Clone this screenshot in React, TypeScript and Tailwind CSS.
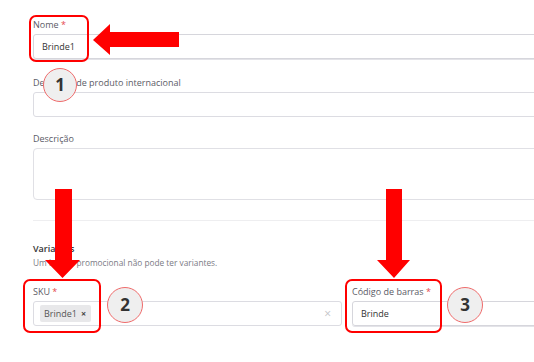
const Req = () => <span className="text-[#e5484d]"> *</span>;

const Field: React.FC<{ label: React.ReactNode; children: React.ReactNode; className?: string }> = ({
  label,
  children,
  className,
}) => (
  <div className={"flex flex-col " + (className ?? "")}>
    <label className="text-[9px] leading-[12px] text-[#5b5b66] mb-[3px]">{label}</label>
    {children}
  </div>
);

const Callout: React.FC<{ n: number; className: string }> = ({ n, className }) => (
  <div
    className={
      "absolute rounded-full bg-[#efefef] border border-[#ef6b6b] flex items-center justify-center text-[17px] font-bold text-[#333] " +
      className
    }
  >
    {n}
  </div>
);

const App: React.FC = () => {
  return (
    <div className="relative w-[534px] h-[362px] overflow-hidden bg-white font-['Open_Sans',sans-serif]">
      <form className="w-[661px] pl-[33px] pt-[19px] flex flex-col">
        <Field label={<>Nome<Req /></>}>
          <div className="h-[25px] rounded-[3px] border border-[#d6d6dc] shadow-[0_1px_0_#e3e3e8] flex items-center px-[8px] text-[9px] text-[#333]">
            Brinde1
          </div>
        </Field>

        <Field label="Descrição de produto internacional" className="mt-[18px]">
          <div className="h-[25px] rounded-[3px] border border-[#dcdce2]" />
        </Field>

        <Field label="Descrição" className="mt-[16px]">
          <div className="h-[52px] rounded-[4px] border border-[#e0e0e5]" />
        </Field>

        <div className="mt-[20px] h-px bg-[#eeeef0]" />

        <div className="mt-[22px] text-[9px] leading-[12px] font-semibold text-[#333]">Variantes</div>
        <div className="mt-[2px] text-[8.3px] leading-[12px] text-[#7a7a84]">
          Um brinde promocional não pode ter variantes.
        </div>

        <div className="mt-[17px] grid grid-cols-2 gap-[10px]">
          <Field label={<>SKU<Req /></>}>
            <div className="h-[25px] rounded-[3px] border border-[#dcdce2] flex items-center pl-[6px] pr-[10px]">
              <span className="h-[17px] rounded-[2px] bg-[#e8e8ea] flex items-center gap-[4px] pl-[4px] pr-[5px] text-[9px] text-[#555]">
                Brinde1
                <span className="text-[9px] font-bold text-[#444] leading-none">×</span>
              </span>
              <span className="ml-auto text-[12px] text-[#c4c4c8] leading-none">×</span>
            </div>
          </Field>
          <Field label={<>Código de barras<Req /></>}>
            <div className="h-[25px] rounded-[3px] border border-[#d6d6dc] shadow-[0_1px_0_#e3e3e8] flex items-center px-[8px] text-[9px] text-[#333]">
              Brinde
            </div>
          </Field>
        </div>
      </form>

      {/* annotation frames */}
      <div className="absolute left-[29px] top-[15px] w-[60px] h-[47px] rounded-[7px] border-[2.5px] border-[#f00]" />
      <div className="absolute left-[23px] top-[279px] w-[78px] h-[54px] rounded-[7px] border-[2.5px] border-[#f00]" />
      <div className="absolute left-[345px] top-[279px] w-[97px] h-[54px] rounded-[7px] border-[2.5px] border-[#f00]" />

      <svg className="absolute inset-0 pointer-events-none" width="534" height="362" viewBox="0 0 534 362">
        <polygon points="93,40 110,24 110,32 179,32 179,47 110,47 110,55" fill="#f00" />
        <polygon points="55,189 72,189 72,260 80,260 62.5,278 45,260 55,260" fill="#f00" />
        <polygon points="386,189 402,189 402,260 410,260 394,278 377,260 386,260" fill="#f00" />
      </svg>

      <Callout n={1} className="left-[43px] top-[68px] w-[34px] h-[34px]" />
      <Callout n={2} className="left-[107px] top-[287px] w-[36px] h-[36px]" />
      <Callout n={3} className="left-[447px] top-[287px] w-[36px] h-[36px]" />
    </div>
  );
};

export default App;
